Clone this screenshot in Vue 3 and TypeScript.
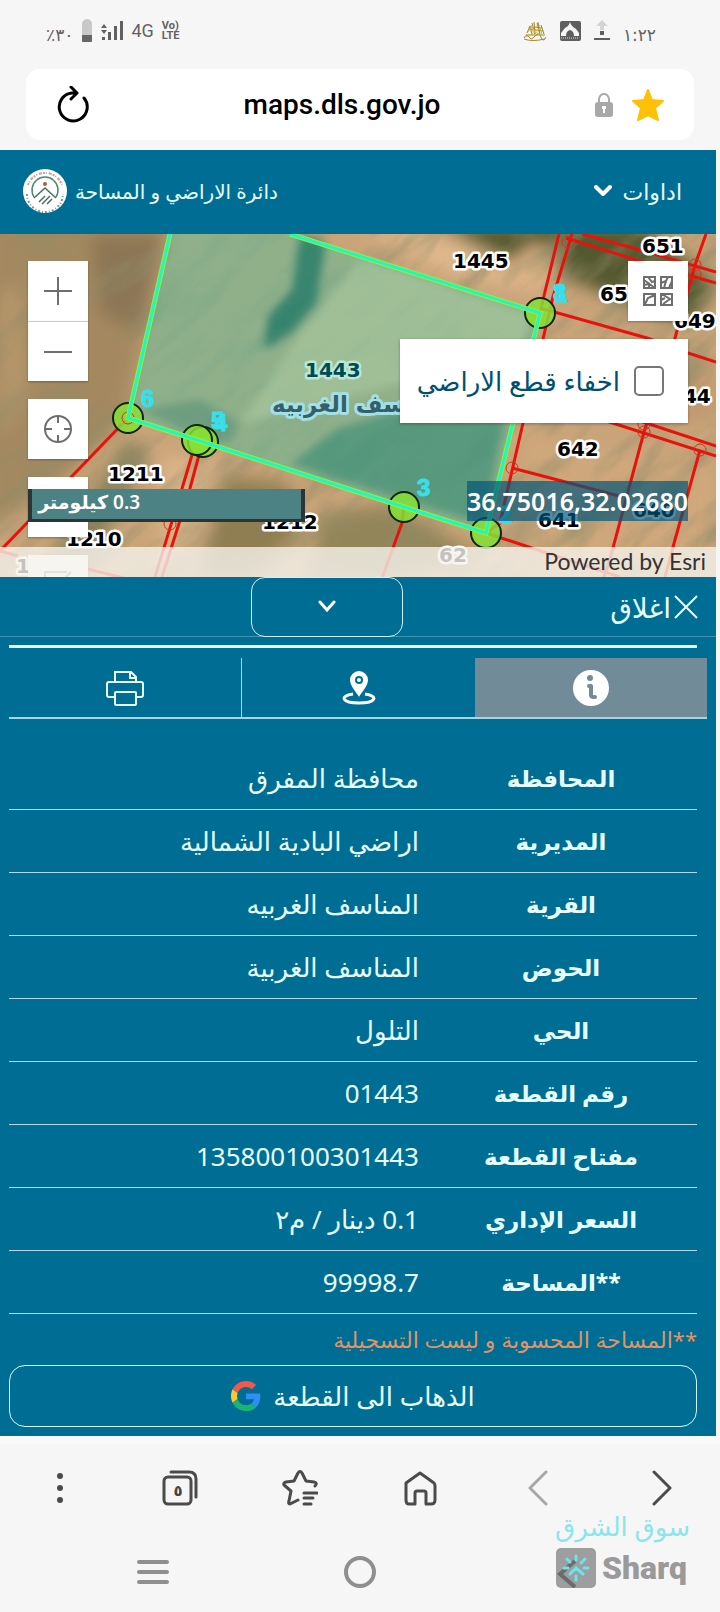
<script setup lang="ts">
import { ref } from 'vue'

interface Row { label: string; value: string }
interface Label { x: number; y: number; text: string }

const rows: Row[] = [
  { label: 'المحافظة', value: 'محافظة المفرق' },
  { label: 'المديرية', value: 'اراضي البادية الشمالية' },
  { label: 'القرية', value: 'المناسف الغربيه' },
  { label: 'الحوض', value: 'المناسف الغربية' },
  { label: 'الحي', value: 'التلول' },
  { label: 'رقم القطعة', value: '01443' },
  { label: 'مفتاح القطعة', value: '135800100301443' },
  { label: 'السعر الإداري', value: '0.1 دينار / م٢' },
  { label: '**المساحة', value: '99998.7' },
]

const parcels: Label[] = [
  { x: 108, y: 247, text: '1211' },
  { x: 262, y: 295, text: '1212' },
  { x: 66, y: 312, text: '1210' },
  { x: 16, y: 339, text: '1' },
  { x: 453, y: 34, text: '1445' },
  { x: 642, y: 19, text: '651' },
  { x: 600, y: 67, text: '650' },
  { x: 674, y: 94, text: '649' },
  { x: 669, y: 169, text: '644' },
  { x: 557, y: 222, text: '642' },
  { x: 538, y: 293, text: '641' },
  { x: 633, y: 283, text: '640' },
  { x: 439, y: 328, text: '62' },
]

const corners: Label[] = [
  { x: 141, y: 173, text: '6' },
  { x: 211, y: 195, text: '5' },
  { x: 214, y: 197, text: '4' },
  { x: 553, y: 67, text: '8' },
  { x: 554, y: 68, text: '1' },
  { x: 417, y: 262, text: '3' },
  { x: 499, y: 289, text: '2' },
]

const redLines: string[] = [
  'M128 184L0 317L18 322M88 335L135 347',
  'M192 221L181 258L155 343M199 221L189 258L162 343',
  'M404 273L402 289L381 347',
  'M486 299L541 317L620 343',
  'M559 0L543 66L540 79M572 0L553 63L523 189L500 289L486 299',
  'M566 4L643 28L716 49M582 0L640 16L716 38',
  'M540 74L647 104L688 119L716 128',
  'M706 0L695 31L675 104L644 198L610 325L604 343',
  'M600 185L716 222M640 187L716 212',
  'M512 234L623 263',
  'M700 216L673 313L665 343',
]

const redNodes: [number, number][] = [
  [568, 8], [695, 31], [695, 40], [644, 198], [644, 190], [700, 216], [512, 234], [170, 290], [128, 184],
]

const greenNodes: [number, number][] = [
  [128, 184], [203, 208], [197, 206], [404, 273], [486, 299], [540, 79],
]

const hideParcels = ref(false)
const activeTab = ref('info')
</script>

<template>
  <div class="screen">
    <header class="status">
      <div class="status-side">
        <span class="battery-text">٪٣٠</span>
        <svg width="12" height="24" viewBox="0 0 12 24" aria-hidden="true">
          <path d="M3 1Q6-1 9 1Q11 3 11 4V22Q11 23 10 23H2Q1 23 1 22V4Q1 3 3 1Z" fill="#c8c8c8" />
          <path d="M1 16H11V22Q11 23 10 23H2Q1 23 1 22Z" fill="#666" />
        </svg>
        <svg class="bars" width="22" height="22" viewBox="0 0 22 22" aria-hidden="true">
          <g fill="#606060"><path d="M3 4L6 8H0ZM3 14L6 10H0Z" /><rect x="1" y="17" width="3" height="3" /><rect x="7" y="12" width="3" height="8" /><rect x="13" y="6" width="3" height="14" /><rect x="19" y="1" width="3" height="19" /></g>
        </svg>
        <span class="net">4G</span>
        <span class="volte"><span>Vo)</span><span>LTE</span></span>
      </div>
      <div class="status-side right">
        <svg width="24" height="22" viewBox="0 0 24 22" fill="none" aria-hidden="true">
          <path d="M1 18Q4 13 6 17T12 16T18 17T23 17M1 19Q9 22 22 19M4 13L7 6L9 15M9 3L12 14L11 2M14 3L17 15L15 2M18 5L21 14M6 9L20 11M3 15L22 15M12 7L19 8" stroke="#a5842a" />
          <path d="M5 12L9 7L12 12L18 8M3 17L12 12L21 16M8 5L10 12M16 5L19 14" stroke="#d9bd4e" />
        </svg>
        <svg width="22" height="22" viewBox="0 0 22 22" aria-hidden="true">
          <rect x="1" y="1" width="21" height="20" rx="2" fill="#5f5f5f" />
          <path d="M11 2Q12 6 17 9L20 13V16H2V13L6 8Q10 6 11 2Z" fill="#f5f5f5" />
          <path d="M7 16Q7 11 11 10Q15 11 15 16Z" fill="#5f5f5f" />
          <path d="M2 18H20" stroke="#ddd" stroke-dasharray="1 1" />
        </svg>
        <svg width="18" height="22" viewBox="0 0 18 22" aria-hidden="true">
          <path d="M9 0L15 6H11V10H7V6H3Z" fill="#d4d4d4" /><path d="M7 11H11V15H7ZM1 18H17V20H1Z" fill="#5e5e5e" />
        </svg>
        <span class="clock">١:٢٢</span>
      </div>
    </header>

    <div class="address">
      <button type="button" class="plain" aria-label="تحديث">
        <svg width="34" height="38" viewBox="0 0 34 38" fill="none" stroke="#000" stroke-width="3" stroke-linecap="round" stroke-linejoin="round">
          <path d="M29 12A14 14 0 1 1 17 7L22 7M16 1L22 7L16 13" />
        </svg>
      </button>
      <span class="url">maps.dls.gov.jo</span>
      <svg width="18" height="24" viewBox="0 0 18 24" aria-hidden="true">
        <path d="M4 10V6Q5 1 9 1T14 6V10" fill="none" stroke="#aaa" stroke-width="2" />
        <rect x="0" y="9" width="18" height="15" rx="3" fill="#a8a8a8" />
        <path d="M7 13H11V16H10V20H8V16H7Z" fill="#fff" />
      </svg>
      <button type="button" class="plain star" aria-label="إشارة مرجعية">
        <svg width="34" height="34" viewBox="0 0 34 34"><path d="M17 2L21 12L32 13L24 20L27 32L17 27L7 32L10 20L2 13L13 12Z" fill="#fec107" stroke="#fec107" stroke-width="2" stroke-linejoin="round" /></svg>
      </button>
    </div>

    <main class="page">
      <nav class="brandbar">
        <div class="brand">
          <svg width="46" height="46" viewBox="0 0 46 46" fill="none" aria-hidden="true">
            <circle cx="23" cy="23" r="22" fill="#fff" />
            <path d="M6 17A18 18 0 0 1 40 17" stroke="#c3a193" stroke-width="2" stroke-dasharray="2 1 1 2 3 1" />
            <path d="M5 26A18 18 0 0 0 41 26" stroke="#7d9393" stroke-width="2" stroke-dasharray="2 2 1 2" />
            <path d="M12 29A13 13 0 1 1 34 29" stroke="#4e8771" stroke-width="1.500" />
            <path d="M12 30L23 20L34 30M17 34L23 28M20 36L28 28M25 36L30 31" stroke="#46705f" stroke-width="1.500" />
            <circle cx="23" cy="16" r="2" fill="#b25c3d" />
          </svg>
          <span>دائرة الاراضي و المساحة</span>
        </div>
        <button type="button" class="plain tools">
          <span>اداوات</span>
          <svg width="20" height="14" viewBox="0 0 20 14" fill="none" stroke="#fff" stroke-width="4" stroke-linecap="round" stroke-linejoin="round"><path d="M3 3L10 10L17 3" /></svg>
        </button>
      </nav>

      <section class="map">
        <svg class="canvas" viewBox="0 0 716 343" preserveAspectRatio="xMidYMid slice" aria-hidden="true">
          <defs>
            <filter id="blur" x="-20%" y="-20%" width="140%" height="140%"><feGaussianBlur stdDeviation="9" /></filter>
            <filter id="soft" x="-20%" y="-20%" width="140%" height="140%"><feGaussianBlur stdDeviation="4" /></filter>
            <filter id="grain" x="0" y="0" width="100%" height="100%">
              <feTurbulence type="fractalNoise" baseFrequency="0.012 0.04" numOctaves="5" seed="8" />
              <feColorMatrix values="0 0 0 0 0.28  0 0 0 0 0.26  0 0 0 0 0.14  2.400 0.600 0 0 -1.350" />
            </filter>
            <clipPath id="frame"><rect width="716" height="343" /></clipPath>
          </defs>
          <g clip-path="url(#frame)">
            <rect width="716" height="343" fill="#c9a479" />
            <g filter="url(#blur)">
              <path d="M-20 -20H170L128 184L60 250L-20 300Z" fill="#a48961" />
              <path d="M90 0H165L145 100L100 80Z" fill="#8c7655" />
              <path d="M0 60L20 50L25 160L0 200Z" fill="#b8986b" />
              <path d="M360 0H460L540 60L450 40Z" fill="#dfb88c" />
              <path d="M430 -10L640 -10L716 50L690 90L620 66L560 40L490 20Z" fill="#53582f" />
              <path d="M530 10L560 20L545 60L500 45Z" fill="#dbb286" />
              <path d="M128 205L148 220L90 330L40 343Z" fill="#85805a" />
              <path d="M160 220L230 230L230 260L200 300L160 343Z" fill="#dbb488" />
              <path d="M220 240L290 250L300 300L250 343H200Z" fill="#8e7e51" />
              <path d="M320 280L390 270L480 320L400 343H310Z" fill="#93855a" />
              <path d="M520 200L716 240V343H560Z" fill="#cfa77c" />
              <path d="M600 150L716 130V190L640 180Z" fill="#c09a6f" />
            </g>
            <g transform="rotate(-42 358 171)"><rect x="-200" y="-300" width="1116" height="940" filter="url(#grain)" opacity="0.600" /></g>
            <path v-for="line in redLines" :key="line" :d="line" class="red" />
            <g class="parcel-label"><text v-for="p in parcels" :key="p.text" :x="p.x" :y="p.y">{{ p.text }}</text></g>
            <path d="M170 0H290L540 79L486 299L404 273L197 206L128 184Z" fill="#6fb795" fill-opacity="0.640" />
            <path d="M300 100L360 24L530 80L512 170L400 150L240 190Z" fill="#b4d2a8" opacity="0.450" filter="url(#soft)" />
            <path d="M300 0L326 8L316 70L292 98L264 116L268 82L292 55Z" fill="#1d7765" opacity="0.750" filter="url(#soft)" />
            <path d="M340 194L400 176L505 184L484 290L390 262L290 230Z" fill="#348a74" opacity="0.600" filter="url(#soft)" />
            <path d="M140 176L200 165L240 190L230 210L195 202Z" fill="#4d8c76" opacity="0.500" filter="url(#soft)" />
            <g class="parcel-label tinted"><text x="305" y="143">1443</text></g>
            <text class="village" x="272" y="178" direction="rtl" text-anchor="end">المناسف الغربيه</text>
            <circle v-for="(n, i) in greenNodes" :key="i" :cx="n[0]" :cy="n[1]" r="15" class="node" />
            <circle v-for="(n, i) in redNodes" :key="'r' + i" :cx="n[0]" :cy="n[1]" r="6" class="ring" />
            <path d="M170 0L128 184L197 206L404 273L486 299L540 79L290 0" class="edge glow" />
            <path d="M170 0L128 184L197 206L404 273L486 299L540 79L290 0" class="edge" />
            <g class="corner"><text v-for="c in corners" :key="c.text" :x="c.x" :y="c.y">{{ c.text }}</text></g>
          </g>
        </svg>

        <div class="left-tools">
          <div class="zoom">
            <button type="button" aria-label="تكبير"><svg width="28" height="28" viewBox="0 0 28 28" stroke="#6e6e6e" stroke-width="2"><path d="M14 0V28M0 14H28" /></svg></button>
            <button type="button" aria-label="تصغير"><svg width="28" height="28" viewBox="0 0 28 28" stroke="#6e6e6e" stroke-width="2"><path d="M0 14H28" /></svg></button>
          </div>
          <button type="button" aria-label="موقعي"><svg width="30" height="30" viewBox="0 0 30 30" fill="none" stroke="#6e6e6e" stroke-width="2"><circle cx="15" cy="15" r="13" /><path d="M15 2V9M15 21V28M2 15H9M21 15H28" /></svg></button>
          <button type="button" aria-label="قياس"></button>
          <button type="button" aria-label="رسم"><svg width="30" height="30" viewBox="0 0 30 30" fill="none" stroke="#999" stroke-width="2"><path d="M24 2H2V28H28V8M14 16L28 2" /></svg></button>
        </div>

        <div class="right-tools">
          <button type="button" aria-label="خريطة الأساس">
            <svg width="30" height="30" viewBox="0 0 30 30" fill="none" stroke="#6e6e6e" stroke-width="2"><path d="M1 1H12V12H1ZM18 1H29V12H18ZM1 18H12V29H1ZM18 18H29V29H18ZM1 4L12 12M5 1L9 6L12 5M1 9L6 8V12M18 7L23 5L25 1M23 5L21 12M26 12L29 5M2 28L5 22L12 19M19 18L27 23L20 28M22 22L18 24" /></svg>
          </button>
          <label class="hide-box">
            <input v-model="hideParcels" type="checkbox" />
            <span>اخفاء قطع الاراضي</span>
          </label>
        </div>

        <div class="scale" dir="rtl">0.3 كيلومتر</div>
        <div class="coords">36.75016,32.02680</div>
        <div class="credit">Powered by Esri</div>
      </section>

      <section class="panel">
        <div class="panel-head">
          <button type="button" class="collapse" aria-label="طي">
            <svg width="18" height="14" viewBox="0 0 18 14" fill="none" stroke="#fff" stroke-width="3" stroke-linecap="round"><path d="M2 2L9 10L16 2" /></svg>
          </button>
          <button type="button" class="plain close">
            <svg width="24" height="24" viewBox="0 0 24 24" stroke="#e6ffff" stroke-width="2"><path d="M1 1L23 23M23 1L1 23" /></svg>
            <span>اغلاق</span>
          </button>
        </div>
        <div class="rule"></div>
        <div class="tabs" role="tablist">
          <button type="button" role="tab" aria-label="معلومات" :class="{ active: activeTab === 'info' }" @click="activeTab = 'info'">
            <svg width="36" height="36" viewBox="0 0 36 36"><circle cx="18" cy="18" r="18" fill="#fff" /><circle cx="17" cy="8" r="3" fill="#718c98" /><path d="M16 16H18V25Q18 27 21 27H22" fill="none" stroke="#718c98" stroke-width="4" stroke-linecap="round" stroke-linejoin="round" /></svg>
          </button>
          <button type="button" role="tab" aria-label="الموقع" :class="{ active: activeTab === 'place' }" @click="activeTab = 'place'">
            <svg width="34" height="34" viewBox="0 0 34 34"><path d="M17 26C15 22 8 15 8 9A9 9 0 0 1 26 9C26 15 19 22 17 26Z" fill="#fff" /><circle cx="17" cy="9" r="3" fill="#fff" stroke="#006d94" stroke-width="2" /><path d="M11 23C-3 25 0 32 17 32S37 25 23 23" fill="none" stroke="#fff" stroke-width="3" /></svg>
          </button>
          <button type="button" role="tab" aria-label="طباعة" :class="{ active: activeTab === 'print' }" @click="activeTab = 'print'">
            <svg width="38" height="36" viewBox="0 0 38 36" fill="none" stroke="#e9ffff" stroke-width="2"><path d="M9 12V2H25L30 7V12M24 2V8H30M9 27H3Q1 27 1 25V14Q1 12 3 12H35Q37 12 37 14V25Q37 27 35 27H30" /><rect x="9" y="22" width="21" height="13" rx="1" /></svg>
          </button>
        </div>

        <table dir="rtl">
          <tbody>
            <tr v-for="row in rows" :key="row.label">
              <th scope="row">{{ row.label }}</th>
              <td>{{ row.value }}</td>
            </tr>
          </tbody>
        </table>
        <p class="note" dir="rtl">**المساحة المحسوبة و ليست التسجيلية</p>
        <button type="button" class="goto" dir="rtl">
          <span>الذهاب الى القطعة</span>
          <svg width="30" height="30" viewBox="0 0 48 48"><path fill="#f2584c" d="M24 9.500c3.500 0 6.700 1.200 9.200 3.600l6.900-6.900C35.900 2.400 30.500 0 24 0 14.600 0 6.500 5.400 2.600 13.200l8 6.200C12.400 13.700 17.700 9.500 24 9.500z" /><path fill="#2f8df5" d="M47 24.600c0-1.600-.2-3.100-.4-4.600H24v9h12.900c-.6 3-2.300 5.500-4.800 7.200l7.700 6C44.400 38 47 31.800 47 24.600z" /><path fill="#fcc834" d="M10.500 28.600c-.5-1.500-.8-3-.8-4.600s.3-3.100.8-4.600l-8-6.200C1 16.500 0 20.100 0 24s.9 7.500 2.600 10.800z" /><path fill="#16b573" d="M24 48c6.500 0 11.900-2.100 15.900-5.800l-7.700-6c-2.200 1.500-4.900 2.300-8.200 2.300-6.300 0-11.600-4.200-13.500-9.900l-8 6.200C6.500 42.600 14.600 48 24 48z" /></svg>
        </button>
      </section>
    </main>

    <footer class="device">
      <nav class="browser-nav">
        <button type="button" class="plain" aria-label="القائمة"><svg width="36" height="36" viewBox="0 0 36 36" fill="#4b4b4b"><circle cx="18" cy="6" r="3" /><circle cx="18" cy="18" r="3" /><circle cx="18" cy="30" r="3" /></svg></button>
        <button type="button" class="plain pages" aria-label="علامات التبويب"><svg width="36" height="36" viewBox="0 0 36 36" fill="none" stroke="#4b4b4b" stroke-width="3"><rect x="2" y="7" width="27" height="27" rx="4" /><path d="M9 2H27Q34 2 34 9V27" stroke-linecap="round" /></svg><span>٥</span></button>
        <button type="button" class="plain" aria-label="الإشارات"><svg width="36" height="36" viewBox="0 0 36 36" fill="none" stroke="#4b4b4b" stroke-width="3" stroke-linecap="round" stroke-linejoin="round"><path d="M16 30L8 34Q6 34 7 31L9 21L2 15Q1 13 4 12L12 11L16 3Q18 0 20 3L24 11L32 12Q36 13 33 16M22 23H35M22 28H31M22 34H29" /></svg></button>
        <button type="button" class="plain" aria-label="الرئيسية"><svg width="36" height="36" viewBox="0 0 36 36" fill="none" stroke="#4b4b4b" stroke-width="3" stroke-linejoin="round"><path d="M4 13L18 3L32 13Q33 14 33 16V30Q33 34 29 34H24V23Q24 21 22 21H15Q13 21 13 23V34H7Q4 34 4 30V15Q4 14 4 13Z" /></svg></button>
        <button type="button" class="plain" aria-label="التالي"><svg width="36" height="36" viewBox="0 0 36 36" fill="none" stroke="#a8a8a8" stroke-width="3" stroke-linecap="round" stroke-linejoin="round"><path d="M24 2L8 18L24 34" /></svg></button>
        <button type="button" class="plain" aria-label="السابق"><svg width="36" height="36" viewBox="0 0 36 36" fill="none" stroke="#4b4b4b" stroke-width="3" stroke-linecap="round" stroke-linejoin="round"><path d="M12 2L28 18L12 34" /></svg></button>
      </nav>
      <nav class="system-nav">
        <button type="button" class="plain" aria-label="التطبيقات الأخيرة"><svg width="34" height="34" viewBox="0 0 34 34" stroke="#8f8f8f" stroke-width="4" stroke-linecap="round"><path d="M3 7H31M3 17H31M3 27H31" /></svg></button>
        <button type="button" class="plain" aria-label="الشاشة الرئيسية"><svg width="34" height="34" viewBox="0 0 34 34"><circle cx="17" cy="17" r="14" fill="none" stroke="#8f8f8f" stroke-width="4" /></svg></button>
        <button type="button" class="plain" aria-label="رجوع"><svg width="34" height="34" viewBox="0 0 34 34" fill="none" stroke="#777" stroke-width="4"><path d="M24 4L9 17L24 30" /></svg></button>
      </nav>
      <div class="watermark">
        <span class="wm-ar">سوق الشرق</span>
        <div class="wm-row">
          <svg width="40" height="40" viewBox="0 0 40 40" fill="none" aria-hidden="true">
            <rect width="40" height="40" rx="5" fill="#9e9e9e" />
            <path d="M19 13L4 26L19 39" stroke="#6c6c6c" stroke-width="4" />
            <g stroke="#6be4ee" stroke-width="3" stroke-linecap="round"><path d="M20 8V12M20 28V32M8 20H12M28 20H32M11 11L14 14M29 11L25 15M14 26L20 20L27 26" /></g>
          </svg>
          <span class="wm-en">Sharq</span>
        </div>
      </div>
    </footer>
  </div>
</template>

<style>
html, body { margin: 0; background: #f6f6f6; }
</style>

<style scoped>
* { box-sizing: border-box; }
.screen { font-family: "Noto Sans", "DejaVu Sans", sans-serif; background: #f6f6f6; color: #e6ffff; }
button { font: inherit; color: inherit; margin: 0; padding: 0; border: 0; cursor: pointer; }
svg { display: block; flex: none; }
.plain { background: none; display: flex; align-items: center; justify-content: center; }

.status { height: 69px; padding: 0 64px 8px 46px; display: flex; align-items: center; justify-content: space-between; color: #626262; }
.status-side { display: flex; align-items: center; gap: 8px; }
.status-side.right { gap: 12px; }
.battery-text, .clock { font-family: "DejaVu Sans", sans-serif; font-size: 17px; padding-top: 8px; }
.net { font-family: Roboto, sans-serif; font-size: 18px; }
.volte { display: flex; flex-direction: column; font: 700 11px/10px Roboto, sans-serif; }

.address { margin: 0 26px; height: 71px; padding: 0 29px; border-radius: 14px; background: #fff; display: flex; align-items: center; color: #000; }
.url { flex: 1; text-align: center; font: 500 28px Roboto, sans-serif; }
.star { margin-left: 18px; }

.page { margin: 10px 4px 0 0; background: #006d94; }
.brandbar { height: 84px; padding: 0 34px 2px 22px; display: flex; align-items: center; justify-content: space-between; font-size: 20px; }
.brand { display: flex; align-items: center; gap: 7px; }
.tools { direction: rtl; gap: 10px; font-size: 22px; }

.map { position: relative; height: 343px; overflow: hidden; }
.canvas { width: 100%; height: 100%; }
.red { fill: none; stroke: #e8120c; stroke-width: 3; }
.ring { fill: none; stroke: #d8301a; stroke-width: 1; }
.node { fill: #86df35; fill-opacity: 0.85; stroke: #10240c; stroke-width: 2; }
.edge { fill: none; stroke: #27f3bd; stroke-width: 3; }
.edge.glow { stroke: #8cf43a; stroke-width: 5; }
.parcel-label { font: 700 20px "DejaVu Sans", sans-serif; fill: #000; stroke: #fff; stroke-width: 5; stroke-linejoin: round; paint-order: stroke; }
.tinted { fill: #004a52; stroke: #b9e8d8; }
.village { font: 700 23px "DejaVu Sans", sans-serif; fill: #33606a; stroke: #a3e0e6; stroke-width: 6; stroke-linejoin: round; paint-order: stroke; }
.corner { font: 700 24px "Liberation Sans", sans-serif; fill: #38dfe8; stroke: #38dfe8; }
.left-tools { position: absolute; left: 28px; top: 27px; display: flex; flex-direction: column; gap: 18px; }
.left-tools button, .right-tools button { width: 60px; height: 60px; background: #fff; display: flex; align-items: center; justify-content: center; box-shadow: 0 1px 2px rgba(0, 0, 0, 0.3); }
.zoom button + button { border-top: 1px solid #ccc; }
.right-tools { position: absolute; right: 28px; top: 27px; display: flex; flex-direction: column; align-items: flex-end; gap: 18px; }
.hide-box { direction: rtl; height: 84px; width: 288px; padding: 0 24px; background: #fff; display: flex; align-items: center; gap: 14px; color: #004f72; font-size: 26px; white-space: nowrap; box-shadow: 0 1px 3px rgba(0, 0, 0, 0.3); }
.hide-box input { appearance: none; flex: none; width: 30px; height: 30px; margin: 0; border: 2px solid #777; border-radius: 5px; background: #fff; }
.hide-box input:checked { background: #006d94; }
.scale { position: absolute; left: 28px; top: 255px; width: 277px; height: 33px; padding-right: 161px; white-space: nowrap; background: #4c8283; border: solid #2c3535; border-width: 0 4px 3px; color: #fff; font-size: 19px; font-weight: 600; line-height: 26px; }
.coords { position: absolute; right: 28px; top: 247px; height: 40px; background: rgba(0, 84, 121, 0.68); color: #fff; font-size: 25px; font-weight: 600; line-height: 40px; }
.credit { position: absolute; inset: auto 0 0; height: 30px; padding-right: 10px; background: rgba(245, 242, 236, 0.8); color: #333; font: 23px/28px Lato, sans-serif; text-align: right; }

.panel { padding: 0 9px 9px; }
.panel-head { margin: 0 -9px; height: 60px; padding: 0 18px 0 36%; border-bottom: 1px solid #4294b0; display: flex; justify-content: space-between; }
.collapse { width: 152px; height: 60px; flex: none; border: 1px solid #cdf2f6; border-radius: 14px; background: none; display: flex; align-items: center; justify-content: center; }
.close { gap: 3px; font-size: 28px; flex-direction: row-reverse; }
.close span { white-space: nowrap; }
.close { direction: ltr; }
.rule { margin: 8px 10px 10px 0; height: 3px; background: #e6ffff; }
.tabs { display: flex; flex-direction: row-reverse; height: 61px; }
.tabs button { flex: 1; background: none; border-bottom: 2px solid #a7d4de; display: flex; align-items: center; justify-content: center; }
.tabs button:last-child { border-right: 1px solid #a7d4de; }
.tabs button.active { background: #718c98; }
table { width: calc(100% - 10px); margin-top: 28px; border-collapse: separate; border-spacing: 0; table-layout: fixed; font-size: 26px; }
th, td { height: 63px; padding: 0; border-bottom: 1px solid #b4dbe3; white-space: nowrap; line-height: 36px; }
th { width: 272px; text-align: center; font-weight: 700; font-size: 23px; }
td { padding-right: 6px; text-align: right; }
.note { margin: 10px 10px 11px 0; font-size: 22px; line-height: 30px; color: #dd9568; white-space: nowrap; }
.goto { width: calc(100% - 10px); height: 62px; border: 1px solid #d4fafc; border-radius: 16px; background: none; display: flex; align-items: center; justify-content: center; gap: 12px; font-size: 26px; }

.device { position: relative; border-top: 8px solid #fbf8fb; }
.browser-nav { display: grid; grid-template-columns: repeat(6, 1fr); height: 88px; align-items: center; }
.pages { position: relative; }
.pages span { position: absolute; color: #444; font-size: 15px; font-weight: 700; padding: 4px 4px 0 0; }
.system-nav { display: flex; height: 80px; align-items: center; justify-content: space-between; padding: 0 136px; }
.watermark { position: absolute; right: 30px; bottom: 24px; width: 134px; display: flex; flex-direction: column; gap: 7px; }
.wm-ar { font-size: 26px; line-height: 30px; color: #8ae5ed; text-align: right; white-space: nowrap; direction: rtl; }
.wm-row { display: flex; gap: 6px; align-items: center; }
.wm-en { color: #9a9a9a; font: 900 32px/40px Roboto, sans-serif; }
</style>
